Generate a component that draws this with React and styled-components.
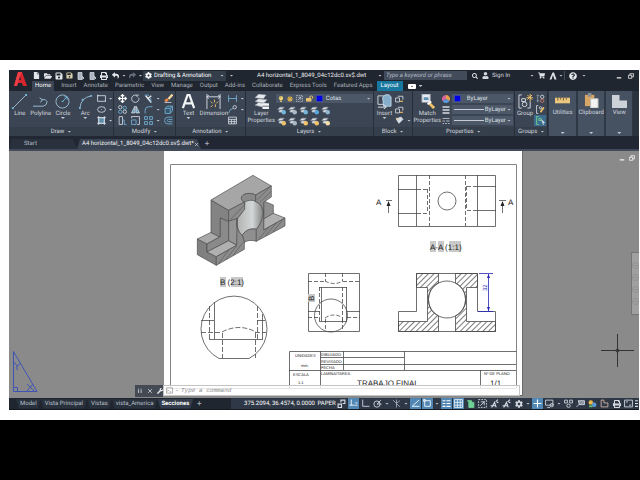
import React from "react";
import styled, { createGlobalStyle } from "styled-components";
import {
  FaCog,
  FaFile,
  FaFolderOpen,
  FaLightbulb,
  FaLockOpen,
  FaPrint,
  FaQuestionCircle,
  FaReply,
  FaSave,
  FaSearch,
  FaShare,
  FaShoppingCart,
  FaSun,
  FaUser,
  FaWrench,
} from "react-icons/fa";

const GlobalStyle = createGlobalStyle`
  * { box-sizing: border-box; }
  body { margin: 0; background: #000; text-rendering: geometricPrecision; }
  button, input, select {
    margin: 0;
    padding: 0;
    border: none;
    background: none;
    color: inherit;
    font: inherit;
    text-rendering: inherit;
    appearance: none;
    outline: none;
  }
  button { cursor: pointer; }
  svg { display: block; flex: none; }
`;

const Page = styled.div`
  display: flex;
  flex-direction: column;
  min-height: 100vh;
  border-top: 60px solid #000;
  border-bottom: 60px solid #000;
  padding: 10px 1px 10px 9px;
  background: #fff;
`;

const Window = styled.div`
  flex: 1;
  display: flex;
  flex-direction: column;
  background: #222933;
  color: #d3d8df;
  font: 6px/8px Roboto, "Liberation Sans", sans-serif;
`;

const Caret = styled.span`
  flex: none;
  width: 4px;
  height: 2px;
  background: ${(p) => (p.$hidden ? "none" : "#c3c9d2")};
  clip-path: polygon(0 0, 100% 0, 50% 100%);
`;

/* ---------- header ---------- */

const Header = styled.header`
  display: grid;
  grid-template-columns: 22px 1fr;
  grid-template-rows: 11px 10px;
  background: #20262f;
`;

const AppButton = styled.button`
  grid-row: span 2;
  display: flex;
  justify-content: center;
  align-items: flex-start;
  padding-top: 2px;
`;

const TitleBar = styled.div`
  display: flex;
  align-items: center;
  min-width: 0;
`;

const TitleTool = styled.button`
  display: flex;
  align-items: center;
  justify-content: center;
  width: ${(p) => p.$w || 11}px;
  height: 11px;
  color: ${(p) => (p.$dim ? "#66707d" : "#e2e5ea")};
`;

const TitleSpacer = styled.span`
  width: 27px;
`;

const WorkspacePicker = styled.label`
  display: flex;
  align-items: center;
  gap: 2px;
  width: 83px;
  height: 10px;
  padding: 0 2px;
  background: #343d4a;
  color: #fff;

  select { flex: 1; min-width: 0; }
`;

const DocTitle = styled.span`
  flex: 1;
  padding-left: 20px;
  white-space: nowrap;
  color: #eceef1;
`;

const SearchBox = styled.input`
  width: 83px;
  height: 9px;
  padding: 0 2px;
  background: #414b59;
  font-style: italic;

  &::placeholder { color: #b4bcc7; opacity: 1; }
`;

const SignIn = styled.button`
  display: flex;
  align-items: center;
  gap: 3px;
  width: 46px;
`;

const Divider = styled.span`
  width: 1px;
  height: 9px;
  background: #444d5a;
`;

const RibbonTabs = styled.nav`
  display: flex;
  align-items: center;
  padding-left: 1px;
`;

const RibbonTab = styled.button`
  height: 10px;
  padding: 0 ${(p) => (p.$contextual ? 4 : 3)}px;
  margin-right: ${(p) => (p.$active ? 4 : 1)}px;
  background: ${(p) => (p.$contextual ? "#16789f" : p.$active ? "#3b4554" : "none")};
  color: ${(p) => (p.$contextual || p.$active ? "#fff" : "#aab1bc")};
`;

/* ---------- ribbon ---------- */

const Ribbon = styled.div`
  display: flex;
  height: 45px;
  padding-right: 6px;
  background: #2b333f;
`;

const Panel = styled.section`
  flex: ${(p) => p.$w} 1 0;
  min-width: 0;
  display: flex;
  flex-direction: column;
  border-right: 1px solid #262e39;
  background: #3b4553;
`;

const PanelBody = styled.div`
  flex: 1;
  display: flex;
  padding-left: 1px;
`;

const PanelTitle = styled.button`
  display: flex;
  align-items: center;
  justify-content: center;
  gap: 3px;
  height: 9px;
  background: #353f4c;
`;

const BigButton = styled.button`
  display: flex;
  flex-direction: column;
  align-items: center;
  width: ${(p) => p.$w}px;
  height: 34px;
  padding-top: 3px;
  line-height: 7px;
  white-space: nowrap;

  svg { margin-bottom: 1px; }
`;

const ToolGrid = styled.div`
  display: grid;
  grid-template-columns: ${(p) => p.$cols};
  grid-auto-rows: 11px;
  align-content: start;
  align-items: center;
  justify-items: center;
  padding-top: 2px;
`;

const ToolButton = styled.button`
  display: flex;
  align-items: center;
  justify-content: center;
  gap: 3px;
  height: 11px;
  width: 100%;
  background: ${(p) => (p.$on ? "#3c6d8e" : "none")};
`;

const LayerStack = styled.div`
  flex: 1;
  min-width: 0;
  padding-top: 3px;
`;

const Combo = styled.label`
  display: flex;
  align-items: center;
  gap: ${(p) => p.$gap || 2}px;
  height: 9px;
  padding: 0 2px;
  background: #4c5767;

  select { flex: 1; min-width: 0; color: #dfe3e9; }
`;

const ComboStack = styled.div`
  flex: 1;
  min-width: 0;
  display: flex;
  flex-direction: column;
  gap: 2px;
  padding: 3px 1px 0 0;
`;

const Swatch = styled.span`
  flex: none;
  width: 7px;
  height: 7px;
  border: 1px solid #3a45a8;
  background: #0000e6;
`;

const LineSample = styled.span`
  width: 30px;
  height: 1px;
  background: #c9ced6;
`;

const Tile = styled.button`
  flex: ${(p) => p.$w} 1 0;
  min-width: 0;
  display: flex;
  flex-direction: column;
  align-items: center;
  gap: 1px;
  padding: 2px 0 2px;
  border-left: 1px solid #2f3845;
  border-right: 1px solid #2f3845;
  background: #465162;
  white-space: nowrap;

  ${Caret} { margin-top: auto; }
`;

/* ---------- file tabs ---------- */

const FileTabs = styled.nav`
  display: flex;
  align-items: center;
  height: 15px;
  padding-top: 3px;
  border-bottom: 2px solid #434a59;
  background: #212833;
`;

const FileTab = styled.button`
  display: flex;
  align-items: center;
  justify-content: space-between;
  width: ${(p) => p.$w}px;
  height: 10px;
  padding: 0 4px 0 ${(p) => (p.$active ? 5 : 15)}px;
  background: ${(p) => (p.$active ? "#3a4351" : "#29313d")};
  color: ${(p) => (p.$active ? "#f0f2f5" : "#b2b9c3")};
  clip-path: polygon(3px 0, calc(100% - 4px) 0, 100% 100%, 0 100%);
  white-space: nowrap;
`;

const AddTab = styled.button`
  width: 12px;
  height: 10px;
  font-size: 8px;
  color: #b2b9c3;
`;

/* ---------- drawing area ---------- */

const Workspace = styled.main`
  position: relative;
  flex: 1;
  display: grid;
  grid-template-columns: 155fr 359px 116fr;
  background: #8a8a8a;
  overflow: hidden;
`;

const Sheet = styled.svg`
  grid-column: 2;
  font-family: "Liberation Sans", Arial, sans-serif;
`;

const Ucs = styled.svg`
  position: absolute;
  left: 3px;
  bottom: 5px;
`;

const Crosshair = styled.svg`
  position: absolute;
  right: 5px;
  bottom: 31px;
`;

const ViewControls = styled.div`
  position: absolute;
  top: 4px;
  right: 4px;
  display: flex;
  gap: 4px;
`;

const NavBar = styled.div`
  position: absolute;
  top: 101px;
  right: 0;
  display: flex;
  flex-direction: column;
  align-items: center;
  justify-content: center;
  gap: 5px;
  width: 8px;
  height: 63px;
  border: 1px solid #757575;
  border-right: none;
  background: #a0a0a0;
`;

const CommandLine = styled.form`
  position: absolute;
  left: 20%;
  right: 119px;
  bottom: 1px;
  display: flex;
  height: 12px;
`;

const CommandHandle = styled.div`
  flex: none;
  display: flex;
  align-items: center;
  gap: 4px;
  width: 28px;
  padding-left: 2px;
  background: #444a54;
  color: #e8eaed;
`;

const CommandField = styled.label`
  flex: 1;
  display: flex;
  align-items: center;
  gap: 2px;
  height: 11px;
  padding: 0 2px;
  border: 1px solid #c4c4c4;
  background: rgba(255, 255, 255, 0.8);

  input {
    flex: 1;
    color: #666;
    font: italic 6px/8px "Liberation Mono", monospace;
  }

  input::placeholder { color: #8c8c8c; opacity: 1; }
`;

/* ---------- bottom bar ---------- */

const Footer = styled.footer`
  display: flex;
  height: 12px;
  border-bottom: 1px solid #161b22;
  background: #1f2630;
`;

const LayoutTabs = styled.nav`
  display: flex;
  align-items: center;
  flex: 1;
  padding-left: 7px;
`;

const LayoutTab = styled.button`
  height: 10px;
  padding: 0 4px;
  background: ${(p) => (p.$active ? "#333c4a" : "#29313d")};
  color: ${(p) => (p.$active ? "#fff" : "#b9c0ca")};
  font-weight: ${(p) => (p.$active ? 700 : 400)};
  clip-path: polygon(0 0, 100% 0, calc(100% - 3px) 100%, 3px 100%);
`;

const StatusBar = styled.div`
  display: flex;
  align-items: center;
  background: #2f3846;
`;

const Coordinates = styled.button`
  width: 86px;
  padding-left: 11px;
  color: #fff;
  white-space: nowrap;
`;

const SpaceToggle = styled.button`
  width: 19px;
  color: #fff;
`;

const StatusButton = styled.button`
  display: flex;
  align-items: center;
  justify-content: center;
  width: ${(p) => p.$w}px;
  height: 11px;
  overflow: hidden;
  border-right: 1px solid ${(p) => (p.$w > 7 ? "#2a323e" : "transparent")};
  background: ${(p) => (p.$on ? "#5187b5" : "none")};
`;

/* ---------- icons ---------- */

const FG = "#d6dce4";
const BLUE = "#74b4d9";
const GOLD = "#f0c36a";

// every glyph is drawn on a 16 x 16 grid
const GLYPHS = {
  line: <><path d="M1 15 15 1" stroke="#9dbfd4" /><path d="M0 14h2v2H0zM14 0h2v2h-2z" fill={BLUE} stroke="none" /></>,
  polyline: <path d="M0 13H11Q15 12 15 8Q14 5 9 6M7 4 10 6 8 9" stroke="#9dbfd4" />,
  circle: <><circle cx="8" cy="8" r="7" stroke="#9dbfd4" /><path d="m8 8 5-5M7 8h2M13 6l0-3-3 0" stroke={BLUE} /></>,
  arc: <><path d="M2 15Q3 4 14 2" stroke="#9dbfd4" /><path d="M1 14h2v2H1zM13 1h2v2h-2zM4 5h2v2H4z" fill={BLUE} stroke="none" /></>,
  rect: <path d="M1 3h14v10H1zM0 2h2v2M14 12h2v2" />,
  ellipse: <><ellipse cx="8" cy="8" rx="7" ry="5" /><path d="M7 8h2" stroke={BLUE} /></>,
  hatch: <><path d="M3 3h10v10H3z" fill="#5a8ba8" /><path d="M3 0v16M13 0v16M0 3h16M0 13h16" /></>,
  move: <path d="M8 1v14M1 8h14M5 4l3-3 3 3M5 12l3 3 3-3M4 5 1 8l3 3M12 5l3 3-3 3" strokeWidth="2" stroke="#fff" />,
  rotate: <path d="M9 2A6.500 6.500 0 1 0 14 7M9 2h5M9 2l3 4" />,
  trim: <><path d="M3 3 13 15M13 3 6 9" strokeWidth="2.500" stroke="#e8ebee" /><path d="M1 2h8M12 7v7" stroke={BLUE} /></>,
  erase: <><path d="m15 1-7 8" stroke="#f4d9a0" strokeWidth="4" /><path d="m7 9-5 4" stroke="#e98648" strokeWidth="5" /><path d="M1 15h12" /></>,
  copy: <><circle cx="4" cy="4" r="3" /><circle cx="12" cy="5" r="3" stroke={BLUE} /><circle cx="4" cy="12" r="3" stroke={BLUE} /><circle cx="12" cy="12" r="3" /></>,
  mirror: <path d="M7 2v12H1zM9 2v12h6z" fill="#5a9ac0" />,
  fillet: <path d="M2 15V9Q2 3 9 3h6" stroke={BLUE} />,
  explode: <path d="M2 6h9v9H2zM2 6l4-4h9v8l-4 5M11 6l4-4" stroke={BLUE} fill="#35556a" />,
  stretch: <><path d="M2 1h6v14H2z" /><path d="M8 7h3v8h4" stroke={BLUE} /></>,
  scale: <><path d="M1 4V1h14v14h-4" /><path d="M1 7h8v8H1z" stroke={BLUE} /></>,
  array: <path d="M1 1h5v5H1zM10 1h5v5h-5zM1 10h5v5H1zM10 10h5v5h-5z" stroke={BLUE} />,
  offset: <path d="M15 2H7a6 6 0 0 0 0 12h8M15 6H8a2 2 0 0 0 0 4h7" stroke={BLUE} />,
  text: <path d="M2 15 7 1h2l5 14M4 10h8" strokeWidth="2.400" stroke="#f1f3f5" />,
  dimension: <><path d="M1 0v16M15 0v16M1 3h14M3 1 1 3l2 2M13 1l2 2-2 2" /><path d="m5 8 2 2M9 6v3M13 8l-2 2M5 14l2-2M10 14v-3" stroke={GOLD} /></>,
  linear: <path d="M1 2v12M15 2v12M1 8h14" stroke={BLUE} />,
  leader: <><path d="M1 15Q2 7 9 6" stroke={BLUE} /><circle cx="12" cy="4" r="3" /></>,
  table: <path d="M1 2h14v12H1zM1 6h14M1 10h14M6 6v8M11 6v8" />,
  layers: <><path d="m1 4 4-4 8 1-3 4zM1 8l4-3 9 1-4 4zM1 12l4-3 9 1-4 4z" fill="#e5e8ec" stroke="#8a939f" strokeWidth=".6" /><path d="M9 10h7v6H9z" fill="#f0f2f4" stroke="none" /><path d="M9 13h7" stroke="#667" /></>,
  insert: <><path d="M1 2h9v9H1z" /><path d="M6 4a5 5 0 0 1 9-1v10H7z" fill="#86aecb" stroke="#b9d0e0" /><path d="M1 14h8M7 11l3 3-3 2" stroke="#e5e8ec" /></>,
  block: <><path d="M1 7h7v7H1zM5 4h9v6" /><path d="M9 13h5" stroke={GOLD} strokeWidth="2" /></>,
  attribute: <><path d="m2 5 5 8 7-7-3-4z" fill="#d8dde3" /><path d="m2 3 4 4" stroke={GOLD} /></>,
  match: <><path d="M2 0h9v9H2z" fill="#e8ebee" stroke="#8a939f" /><path d="M4 5h5" stroke="#5c8fb8" strokeWidth="3" /><path d="m15 15-5-5" stroke={GOLD} strokeWidth="3" /><path d="m8 11 4-3" stroke="#fff" strokeWidth="2" /></>,
  wheel: <g stroke="none"><path d="M8 8V0a8 8 0 0 1 7 12z" fill="#e6a04d" /><path d="M8 8l7 4A8 8 0 0 1 1 12z" fill="#5b9bd8" /><path d="M8 8 1 12A8 8 0 0 1 8 0z" fill="#d765a0" /></g>,
  weight: <path d="M1 2h14M1 8h14M1 14h14" strokeWidth="3" />,
  linetype: <path d="M1 3h14M1 8h5M8 8h7M1 13h3M6 13h4M12 13h3" strokeWidth="2" stroke="#aab2bd" />,
  group: <><path d="M4 1H1v14h3M10 15h3V8M4 5h4v3H4z" /><circle cx="7" cy="11" r="2.500" /><path d="M13 0v8M9 4h7M10 1l5 5M15 1l-5 5" stroke={GOLD} /></>,
  ungroup: <><path d="M3 1v14M1 3h5M1 12h5" stroke="#8d9bab" /><circle cx="11" cy="5" r="3" /><circle cx="11" cy="12" r="3" stroke="#d67a6d" /></>,
  groupEdit: <><path d="M4 1H1v14h3" /><circle cx="8" cy="5" r="2" /><path d="m14 4-6 9" stroke={GOLD} strokeWidth="3" /></>,
  groupSelect: <><path d="M5 1H1v14h4M5 4h4v4H5z" stroke="#77d28e" /><path d="m9 6 6 6-3 .5 1.500 3" fill="#fff" /></>,
  ruler: <><path d="M0 5h16v6H0z" fill="#eac67e" stroke="none" /><path d="M3 5v3M6 5v2M9 5v3M12 5v2" stroke="#6d5830" /></>,
  clipboard: <><path d="M1 2h10v12H1z" fill="#d8a766" stroke="none" /><path d="M4 0h4v4H4z" fill="#8c8f94" stroke="none" /><path d="M7 6h8v10H7z" fill="#f3f3f3" stroke="#b8b8b8" /></>,
  viewport: <path d="M0 2h8v6h8v8H0z" fill="#cdd2d9" stroke="none" />,
  model: <path d="M2 9h6v6H2zM7 6V2h7v6h-4" strokeWidth="2" />,
  snap: <path d="M4 1v10M1 11h9M11 7h4M11 11h4" stroke="#fff" />,
  ortho: <path d="M3 1v12h12" />,
  polar: <><circle cx="7" cy="9" r="5.500" /><path d="M7 9h8M7 9l7-7" /></>,
  iso: <path d="M2 2l12 12M8 1v14M14 3 8 8" stroke="#a6afbb" />,
  angle: <path d="M14 2 2 13h13" stroke="#fff" />,
  osnap: <path d="M3 3h10v10H3zM1 1h3v3H1z" stroke="#fff" />,
  lineweight: <path d="M1 3h5M8 3h7M1 8h5M8 8h7M1 13h5M8 13h7" strokeWidth="2" stroke="#fff" />,
  trans: <path d="M1 1h14v14H1zM1 6h14M1 11h14M6 1v14M11 1v14" stroke="#e3eef6" />,
  cycle: <path d="M2 3h8v8M5 6h9v9H5z" stroke="#6ed193" fill="#70d49a" />,
  filter: <><path d="M1 1h14v14H1z" strokeDasharray="3 2" /><path d="m4 12 8-8M5 5h6v6" /></>,
  annoA: <path d="m3 15 5-9 3 9M1 12h10M10 5l4-4M12 6h3" strokeWidth="2" />,
  plus: <path d="M8 1v14M1 8h14" stroke="#fff" strokeWidth="2" />,
  monitor: <><path d="M1 2h13v9H1zM4 15h5" /><circle cx="12" cy="11" r="3" /></>,
  isolate: <><path d="M1 2h5v5H1zM10 2h5v5h-5z" /><circle cx="8" cy="12" r="3" /></>,
  units: <path d="M4 3h11v7H6zM1 14l5-5" fill="#8b949f" />,
  perf: <><circle cx="5" cy="6" r="4" fill="#e9b84c" stroke="none" /><circle cx="11" cy="10" r="4" fill="#5b9bd8" stroke="none" /><path d="M2 13h6" stroke="#65c878" strokeWidth="3" /></>,
  polygon: <path d="M2 2h5v5h7v7H2z" stroke="#d9b5a6" />,
  full: <path d="M1 2h14v12H1zM4 6V5h3M12 10v1H9" />,
  menu: <path d="M2 3h12M2 8h12M2 13h12" strokeWidth="2" />,
  newProps: <path d="M2 1h8v14H2zM10 8l4 4-3 3" fill="#aab3bf" />,
  min: <path d="M2 13h12" strokeWidth="3" stroke="#fff" />,
  restore: <path d="M1 6h9v8H1zM5 6V2h10v8h-5" strokeWidth="2" stroke="#fff" />,
  close: <path d="m3 3 10 10M13 3 3 13" strokeWidth="2" />,
  prompt: <path d="M1 2h14v12H1zM3 6l3 2-3 2M8 11h4" stroke="#888" />,
  grip: <path d="M4 2v12M11 2v12" strokeDasharray="2 1" strokeWidth="3" />,
  nav: <path d="M8 1a7 7 0 1 0 0 14 7 7 0 1 0 0-14M4 8h8" stroke="#8a8a8a" />,
  autodesk: <path d="M1 15 7 1h3l5 14h-4L8 6l-3 9z" fill="#e2e5ea" stroke="none" />,
};

function Icon({ name, size = 9 }) {
  return (
    <svg width={size} height={size} viewBox="0 0 16 16" fill="none" stroke={FG} strokeWidth={size > 10 ? 1 : 1.5} aria-hidden="true">
      {GLYPHS[name]}
    </svg>
  );
}

/* ---------- data ---------- */

const RIBBON_TABS = ["Home", "Insert", "Annotate", "Parametric", "View", "Manage", "Output", "Add-ins", "Collaborate", "Express Tools", "Featured Apps"];

const DRAW = [
  { label: "Line", icon: "line", w: 20 },
  { label: "Polyline", icon: "polyline", w: 22 },
  { label: "Circle", icon: "circle", w: 23, menu: true },
  { label: "Arc", icon: "arc", w: 22, menu: true },
];

const MODIFY = ["move", "rotate", "trim", "erase", "copy", "mirror", "fillet", "explode", "stretch", "scale", "array", "offset"];
const MODIFY_MENUS = ["trim", "fillet", "array"];

const LAYER_TOOLS = [BLUE, "#aab7c5", BLUE, "#5aa7dc", "#8fb4cc", GOLD, "#aab7c5", GOLD, GOLD, "#f3dfa8"];

const LAYOUTS = ["Model", "Vista Principal", "Vistas", "vista_America", "Secciones"];

// "|" opens the list of the tool before it
const STATUS = [
  ["model"], ["snap", true], ["ortho"], ["polar"], ["|"], ["iso"], ["|"],
  ["angle", true], ["osnap", true], ["|"], ["lineweight", true], ["trans", true],
  ["cycle"], ["filter"], ["annoA"], ["annoA"], ["gear"], ["|"], ["plus", true],
  ["monitor"], ["|"], ["isolate"], ["units"], ["perf"], ["polygon"], ["print"], ["full"], ["menu"],
];

const STATUS_WIDTHS = { "|": 7, menu: 4 };

/* ---------- sections ---------- */

function TopBar() {
  return (
    <Header>
      <AppButton aria-label="Application menu">
        <svg width="13" height="15" viewBox="0 0 13 15">
          <path d="M0 14 4 0h4l5 14H9L8 11H4l-1 3zM5 8h2L6 4z" fill="#d8262e" fillRule="evenodd" />
          <path d="M4 0h4L6 4 3 14H0z" fill="#ee3e45" />
        </svg>
      </AppButton>
      <TitleBar>
        <TitleTool aria-label="New"><FaFile size={7} /></TitleTool>
        <TitleTool aria-label="Open"><FaFolderOpen size={8} /></TitleTool>
        <TitleTool aria-label="Save"><FaSave size={8} /></TitleTool>
        <TitleTool aria-label="Save as"><FaSave size={7} color="#d8cfae" /></TitleTool>
        <TitleTool aria-label="Open from web" $w={12}><Icon name="newProps" size={8} /></TitleTool>
        <TitleTool aria-label="Save to web"><Icon name="newProps" size={8} /></TitleTool>
        <TitleTool aria-label="Plot" $w={12}><FaPrint size={8} /></TitleTool>
        <TitleTool aria-label="Undo"><FaReply size={7} /></TitleTool>
        <TitleTool aria-label="Undo list" $w={6}><Caret /></TitleTool>
        <TitleTool aria-label="Redo" $dim><FaShare size={7} /></TitleTool>
        <TitleTool aria-label="Redo list" $w={5}><Caret /></TitleTool>
        <WorkspacePicker>
          <FaCog size={7} />
          <select aria-label="Workspace"><option>Drafting &amp; Annotation</option></select>
          <Caret />
        </WorkspacePicker>
        <TitleTool aria-label="Customize"><Caret /></TitleTool>
        <DocTitle>A4 horizontal_1_8049_04c12dc0.sv$.dwt</DocTitle>
        <TitleTool aria-label="Collapse search" $w={8}><Caret /></TitleTool>
        <SearchBox aria-label="Search" placeholder="Type a keyword or phrase" />
        <TitleTool aria-label="Search" $w={15}><FaSearch size={6} /></TitleTool>
        <SignIn><FaUser size={7} />Sign In</SignIn>
        <TitleTool aria-label="Account" $w={8}><Caret /></TitleTool>
        <TitleTool aria-label="App store"><FaShoppingCart size={7} /></TitleTool>
        <TitleTool aria-label="Autodesk"><Icon name="autodesk" size={8} /></TitleTool>
        <TitleTool aria-label="Autodesk menu" $w={6}><Caret /></TitleTool>
        <Divider />
        <TitleTool aria-label="Help" $w={15}><FaQuestionCircle size={8} /></TitleTool>
        <TitleTool aria-label="Help menu" $w={8}><Caret /></TitleTool>
        <TitleSpacer />
        <TitleTool aria-label="Minimize" $w={8}><Icon name="min" size={6} /></TitleTool>
        <TitleTool aria-label="Restore" $w={16}><Icon name="restore" size={6} /></TitleTool>
      </TitleBar>
      <RibbonTabs>
        {RIBBON_TABS.map((tab) => (
          <RibbonTab key={tab} $active={tab === "Home"}>{tab}</RibbonTab>
        ))}
        <RibbonTab $active $contextual>Layout</RibbonTab>
        <TitleTool aria-label="Ribbon display">
          <svg width="8" height="5" viewBox="0 0 8 5"><rect width="8" height="5" rx="1" fill="#fff" /><path d="M3 3 4 1.500 5 3" fill="#444" /></svg>
        </TitleTool>
        <TitleTool aria-label="Ribbon menu" $w={6}><Caret /></TitleTool>
      </RibbonTabs>
    </Header>
  );
}

function RibbonPanel({ title, w, children }) {
  return (
    <Panel $w={w}>
      <PanelBody>{children}</PanelBody>
      <PanelTitle>{title}<Caret /></PanelTitle>
    </Panel>
  );
}

function RibbonBar() {
  return (
    <Ribbon>
      <RibbonPanel title="Draw" w={106}>
        {DRAW.map((t) => (
          <BigButton key={t.label} $w={t.w}>
            <Icon name={t.icon} size={15} />
            <span>{t.label}</span>
            <Caret $hidden={!t.menu} />
          </BigButton>
        ))}
        <ToolGrid $cols="17px">
          {["rect", "ellipse", "hatch"].map((name) => (
            <ToolButton key={name} aria-label={name}><Icon name={name} /><Caret /></ToolButton>
          ))}
        </ToolGrid>
      </RibbonPanel>

      <RibbonPanel title="Modify" w={62}>
        <ToolGrid $cols="14px 13px 20px 12px">
          {MODIFY.map((name) => (
            <ToolButton key={name} aria-label={name}>
              <Icon name={name} />
              {MODIFY_MENUS.includes(name) && <Caret />}
            </ToolButton>
          ))}
        </ToolGrid>
      </RibbonPanel>

      <RibbonPanel title="Annotation" w={70}>
        <BigButton $w={23}><Icon name="text" size={15} /><span>Text</span><Caret /></BigButton>
        <BigButton $w={28}><Icon name="dimension" size={15} /><span>Dimension</span></BigButton>
        <ToolGrid $cols="17px">
          <ToolButton aria-label="Linear"><Icon name="linear" /><Caret /></ToolButton>
          <ToolButton aria-label="Leader"><Icon name="leader" /><Caret /></ToolButton>
          <ToolButton aria-label="Table"><Icon name="table" /><Caret $hidden /></ToolButton>
        </ToolGrid>
      </RibbonPanel>

      <RibbonPanel title="Layers" w={129}>
        <BigButton $w={29}><Icon name="layers" size={15} /><span>Layer</span><span>Properties</span></BigButton>
        <LayerStack>
          <Combo $gap={3}>
            <FaLightbulb size={6} color="#f7d774" />
            <FaSun size={6} color="#f4bf4a" />
            <Icon name="filter" size={7} />
            <FaLockOpen size={7} color="#eac46e" />
            <Swatch />
            <select aria-label="Current layer"><option>Cotas</option></select>
            <Caret />
          </Combo>
          <ToolGrid $cols="repeat(5, 11px)">
            {LAYER_TOOLS.map((color, i) => (
              <ToolButton key={i} aria-label={`Layer tool ${i + 1}`}>
                <svg width="9" height="9" viewBox="0 0 16 16" fill="none">
                  <path d="m1 6 4-4h8L9 6zM3 9l2-2h8l-4 4H4z" fill="#dfe3e8" stroke="#7c8794" />
                  <circle cx="12" cy="11" r="4" fill={color} />
                </svg>
              </ToolButton>
            ))}
          </ToolGrid>
        </LayerStack>
      </RibbonPanel>

      <RibbonPanel title="Block" w={39}>
        <BigButton $w={20}><Icon name="insert" size={15} /><span>Insert</span><Caret /></BigButton>
        <ToolGrid $cols="17px">
          <ToolButton aria-label="Create"><Icon name="block" /><Caret $hidden /></ToolButton>
          <ToolButton aria-label="Edit"><Icon name="block" /><Caret $hidden /></ToolButton>
          <ToolButton aria-label="Edit attributes"><Icon name="attribute" /><Caret /></ToolButton>
        </ToolGrid>
      </RibbonPanel>

      <RibbonPanel title="Properties" w={103}>
        <BigButton $w={27}><Icon name="match" size={15} /><span>Match</span><span>Properties</span></BigButton>
        <ToolGrid $cols="11px">
          {["wheel", "weight", "linetype"].map((name) => <Icon key={name} name={name} size={8} />)}
        </ToolGrid>
        <ComboStack>
          <Combo $gap={6}>
            <Swatch />
            <select aria-label="Object color"><option>ByLayer</option></select>
            <Caret />
          </Combo>
          {["Lineweight", "Linetype"].map((label) => (
            <Combo key={label} $gap={1}>
              <LineSample />
              <select aria-label={label}><option>ByLayer</option></select>
              <Caret />
            </Combo>
          ))}
        </ComboStack>
      </RibbonPanel>

      <RibbonPanel title="Groups" w={33}>
        <BigButton $w={18}><Icon name="group" size={15} /><span>Group</span></BigButton>
        <ToolGrid $cols="12px">
          <ToolButton aria-label="Ungroup"><Icon name="ungroup" /></ToolButton>
          <ToolButton aria-label="Group edit"><Icon name="groupEdit" /></ToolButton>
          <ToolButton aria-label="Group selection" $on><Icon name="groupSelect" /></ToolButton>
        </ToolGrid>
      </RibbonPanel>

      <Tile $w={27}><Icon name="ruler" size={15} />Utilities<Caret /></Tile>
      <Tile $w={27}><Icon name="clipboard" size={15} />Clipboard<Caret /></Tile>
      <Tile $w={26}><Icon name="viewport" size={15} />View<Caret /></Tile>
    </Ribbon>
  );
}

function IsometricPart() {
  return (
    <g transform="translate(160 150) scale(.3333)" stroke="#4a4a4a" strokeWidth="2" strokeLinejoin="round">
      <path d="M112 267 141 282V306L169 320V346L112 314Z" fill="#808080" />
      <path d="M112 267 155 246 181 260 141 282Z" fill="#aaa" />
      <path d="M153 150 206 181V214L181 204V262L153 248Z" fill="#838383" />
      <path d="M141 282 181 260V204L206 215V272L141 306Z" fill="#8a8a8a" />
      <path d="M141 306 206 272 230 286 169 320Z" fill="#b0b0b0" />
      <path d="M206 213 232 203V286L206 272Z" fill="#949494" />
      <path d="M311 153 340 165V192L311 207Z" fill="#8f8f8f" />
      <path d="M311 207 340 190 375 204 311 240Z" fill="#b0b0b0" />
      <path d="M153 150 279 76 334 108 287 135C268 125 244 132 244 145 244 150 248 154 254 156L206 181Z" fill="#a6a6a6" />
      <path d="M244 145C244 132 268 125 287 135V160H254V156C248 154 244 150 244 145Z" fill="#8a8a8a" />
      <path d="M232 205C245 192 254 178 254 156 272 146 288 152 300 162 314 180 310 212 289 238 272 234 256 240 247 256 232 246 227 222 232 205Z" fill="url(#bore)" />
      <path d="M247 256C256 240 272 234 289 238V274C276 270 262 270 253 278Z" fill="#8f8f8f" />
      <g fill="#8c8c8c">
        <path d="M206 181 254 156V178L232 205 206 213Z" />
        <path d="M287 135 334 108V141L311 157V185C306 168 298 158 287 156Z" />
        <path d="M311 185V240L375 204V228L289 274V238C302 224 309 205 311 185Z" />
        <path d="M232 205C228 225 234 246 247 256L253 276V298L169 346V320L230 286Z" />
      </g>
      <path d="M212 208 254 164M292 150 328 113M300 157 334 124M296 268 326 232M316 258 349 219M338 246 368 210M176 340 206 300M198 328 230 288M220 315 250 276" fill="none" strokeWidth="1.500" />
    </g>
  );
}

function TopView() {
  return (
    <g>
      <path d="M398.500 175.500H495.500V226.500H398.500ZM416.500 175V226M477.500 175V226M398 189.500H417M398 213.500H417M477 186.500H496M477 210.500H496" />
      <path d="M429.500 175V226M465.500 175V226" strokeDasharray="4 2" />
      <path d="M417 189.500H428M417 213.500H428M427.500 189V213M467 186.500H477M467 210.500H477M466.500 186V210" strokeDasharray="4 2" />
      <circle cx="447" cy="201" r="9" />
      <path d="M386 200.500H392M388.500 202V213M499 200.500H506M502.500 202V213" />
      <path d="M388.500 201 386.500 206H390.500ZM502.500 201 500.500 206H504.500Z" fill="#222" stroke="none" />
    </g>
  );
}

function SectionView() {
  const half = "M416.500 273.500H438.500V283A18.500 18.500 0 0 0 438.500 316V331.500H398.500V321.500H427.500V287.500H416.500Z";
  return (
    <g>
      <path d={half} fill="url(#hatch)" />
      <path d={half} fill="url(#hatchRight)" transform="matrix(-1 0 0 1 894 0)" />
      <path d="M416.500 273.500H477.500V311.500H495.500V331.500H398.500V311.500H416.500Z" />
      <circle cx="447" cy="299.500" r="18.500" />
      <g stroke="#2525b8" fill="#2525b8">
        <path d="M479 273.500H493M478 311.500H493M488.500 274V311" />
        <path d="M488.500 274 487 278H490ZM488.500 311 487 307H490Z" stroke="none" />
      </g>
    </g>
  );
}

function SideViews() {
  return (
    <g>
      {/* enlarged detail B */}
      <path d="M219 358.500A33 33 0 1 1 249 358.500Z" />
      <path d="M214.500 302V339M262.500 314V339M209 339.500H263M201 320.500H214M257 320.500H265" />
      <path d="M209.500 306V339M257.500 306V339M201 332.500H222M255 332.500H266M222.500 333V358M255.500 333V358M222 332Q239 323 256 332" strokeDasharray="5 2" />
      {/* side view */}
      <path d="M308.500 273.500H359.500V331.500H308.500ZM321.500 287V321M346.500 287V321M319 287.500H347M319 321.500H347M308 311.500H320M347 311.500H360" />
      <path d="M308 281.500H325M343 281.500H360M325.500 273V281M342.500 273V281M325 281Q334 286 343 281M319.500 287V321M342.500 287V321M308 317.500H320M347 317.500H360M325 318Q334 312 343 318M325.500 319V331M342.500 319V331" strokeDasharray="4 2" />
      <circle cx="331" cy="315.500" r="16.500" />
    </g>
  );
}

function DrawingSheet() {
  return (
    <Sheet width="359" height="247" viewBox="164 151 359 247" role="img" aria-label="Layout sheet">
      <defs>
        <pattern id="hatch" width="4" height="4" patternUnits="userSpaceOnUse" patternTransform="rotate(45)">
          <path d="M.5 0V4" stroke="#444" strokeWidth=".7" />
        </pattern>
        <pattern id="hatchRight" width="4" height="4" patternUnits="userSpaceOnUse" patternTransform="rotate(-45)">
          <path d="M.5 0V4" stroke="#444" strokeWidth=".7" />
        </pattern>
        <linearGradient id="bore" x1="0" x2="1">
          <stop offset="0" stopColor="#b0b0b0" />
          <stop offset=".6" stopColor="#d3d7d7" />
          <stop offset="1" stopColor="#858585" />
        </linearGradient>
      </defs>
      <path d="M164 151H523V396H164Z" fill="#6b6b6b" />
      <path d="M164 151H522V395H164Z" fill="#fff" />
      <path d="M170.500 388.500V164.500H516.500V388.500Z" fill="none" stroke="#858585" />

      <IsometricPart />

      <g fill="none" stroke="#4a4a4a" strokeWidth=".8">
        <TopView />
        <SectionView />
        <SideViews />
        <path d="M289.500 388V351.500H516.500M320.500 351V388M343.500 351V370M404.500 351V370M480.500 370V388M320 357.500H404M320 364.500H516M289 370.500H516" />
      </g>

      <path d="M220 277h6v10h-6zM231 277h12v10h-12zM430 241h6v11h-6zM438 241h6v11h-6zM449 241h12v11h-12zM308 294h7v8h-7z" fill="#c9c9c9" />
      <g fill="#1c1c1c" fontSize="8">
        <text x="220" y="285">B (2:1)</text>
        <text x="430" y="250">A-A (1:1)</text>
        <text x="376" y="205">A</text>
        <text x="508" y="205">A</text>
        <text transform="translate(314 301) rotate(-90)">B</text>
        <text x="357" y="386">TRABAJO FINAL</text>
        <text x="490" y="386">1/1</text>
      </g>
      <text transform="translate(487 291) rotate(-90)" fontSize="6" fill="#2525b8">32</text>
      <g fill="#222" fontSize="4">
        <text x="295" y="357">UNIDADES</text>
        <text x="301" y="367">mm.</text>
        <text x="321" y="356">DIBUJADO</text>
        <text x="321" y="363">REVISADO</text>
        <text x="321" y="369">FECHA</text>
        <text x="293" y="376">ESCALA</text>
        <text x="298" y="384">1:1</text>
        <text x="321" y="375">LAMINA/TAREA</text>
        <text x="484" y="375">Nº DE PLANO</text>
      </g>
    </Sheet>
  );
}

function DrawingArea() {
  return (
    <Workspace>
      <DrawingSheet />
      <Ucs width="26" height="43" viewBox="0 0 26 43" fill="none" stroke="#3f55b5" aria-hidden="true">
        <path d="M1.500 1.500V41.500H25L1.500 1.500M1.500 37.500H5.500V41.500M2 12l3 4 4-3M5 16v4M15 34l7 7M21 34l-6 7" />
      </Ucs>
      <ViewControls>
        <button aria-label="Minimize view"><Icon name="min" size={6} /></button>
        <button aria-label="Restore view"><Icon name="restore" size={6} /></button>
      </ViewControls>
      <NavBar>
        {["wheel", "pan", "zoom", "orbit"].map((name) => <Icon key={name} name="nav" size={7} />)}
      </NavBar>
      <Crosshair width="34" height="34" viewBox="0 0 34 34" fill="none" stroke="#333" aria-hidden="true">
        <path d="M17.500 1V34M1 17.500H34" />
        <circle cx="17.500" cy="17.500" r="1.500" />
      </Crosshair>
      <CommandLine onSubmit={(e) => e.preventDefault()}>
        <CommandHandle>
          <Icon name="grip" size={6} />
          <Icon name="close" size={6} />
          <FaWrench size={6} />
        </CommandHandle>
        <CommandField>
          <Icon name="prompt" size={7} />
          <Caret />
          <input aria-label="Command" placeholder="Type a command" />
        </CommandField>
      </CommandLine>
    </Workspace>
  );
}

function StatusIcon({ name }) {
  if (name === "|") return <Caret />;
  if (name === "gear") return <FaCog size={8} />;
  if (name === "print") return <FaPrint size={8} />;
  return <Icon name={name} />;
}

function BottomBar() {
  return (
    <Footer>
      <LayoutTabs>
        {LAYOUTS.map((name) => (
          <LayoutTab key={name} $active={name === "Secciones"}>{name}</LayoutTab>
        ))}
        <AddTab aria-label="New layout">+</AddTab>
      </LayoutTabs>
      <StatusBar>
        <Coordinates>375.2094, 36.4574, 0.0000</Coordinates>
        <SpaceToggle>PAPER</SpaceToggle>
        {STATUS.map(([name, on], i) => (
          <StatusButton key={i} $on={on} $w={STATUS_WIDTHS[name] || 12} aria-label={name === "|" ? "More options" : name}>
            <StatusIcon name={name} />
          </StatusButton>
        ))}
      </StatusBar>
    </Footer>
  );
}

function App() {
  return (
    <>
      <GlobalStyle />
      <Page>
        <Window>
          <TopBar />
          <RibbonBar />
          <FileTabs>
            <FileTab $w={68}>Start</FileTab>
            <FileTab $w={124} $active>A4 horizontal_1_8049_04c12dc0.sv$.dwt*<Icon name="close" size={5} /></FileTab>
            <AddTab aria-label="New drawing">+</AddTab>
          </FileTabs>
          <DrawingArea />
          <BottomBar />
        </Window>
      </Page>
    </>
  );
}

export default App;
